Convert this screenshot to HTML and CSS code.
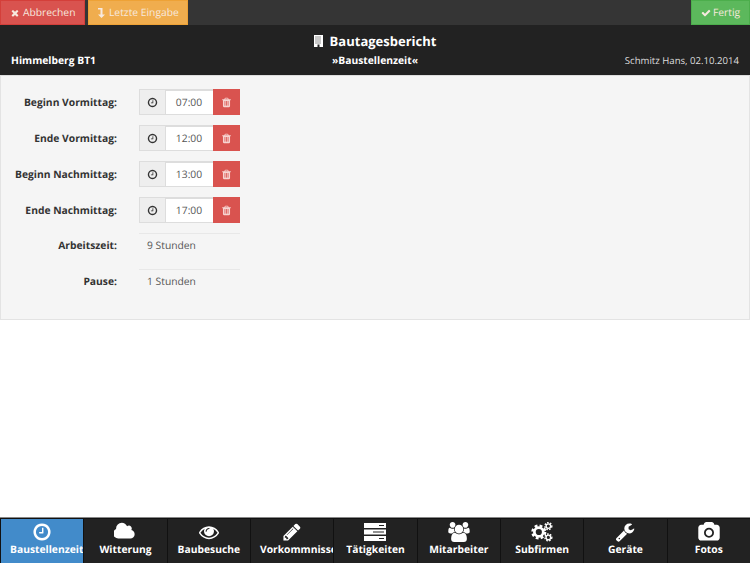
FILE: index.html
```html
<!DOCTYPE html>
<html lang="de">

<head>
    <meta charset="UTF-8">
    <meta name="viewport" content="width=device-width, initial-scale=1.0">
    <title>Bautagesbericht</title>
    <link rel="stylesheet" href="styles.css">
</head>

<body>
    <svg class="defs" width="0" height="0">
        <symbol id="i-times" viewBox="0 0 1792 1792"><path d="M1490 1322q0 40-28 68l-136 136q-28 28-68 28t-68-28l-294-294-294 294q-28 28-68 28t-68-28l-136-136q-28-28-28-68t28-68l294-294-294-294q-28-28-28-68t28-68l136-136q28-28 68-28t68 28l294 294 294-294q28-28 68-28t68 28l136 136q28 28 28 68t-28 68l-294 294 294 294q28 28 28 68z"/></symbol>
        <symbol id="i-check" viewBox="0 0 1792 1792"><path d="M1671 566q0 40-28 68l-724 724-136 136q-28 28-68 28t-68-28l-136-136-362-362q-28-28-28-68t28-68l136-136q28-28 68-28t68 28l294 295 656-657q28-28 68-28t68 28l136 136q28 28 28 68z"/></symbol>
        <symbol id="i-level" viewBox="0 0 7 10"><path d="M0 0h4.500v6.500H7L3.500 10 0 6.500h2.500v-5H0z"/></symbol>
        <symbol id="i-building" viewBox="0 0 18 24"><path fill-rule="evenodd" d="M0 0h18v24H0zM3 3v2h2V3zm4 0v2h2V3zm4 0v2h2V3zM3 7v2h2V7zm4 0v2h2V7zm4 0v2h2V7zM3 11v2h2v-2zm4 0v2h2v-2zm4 0v2h2v-2zM3 15v2h2v-2zm4 0v2h2v-2zm4 0v2h2v-2zM7 19v5h4v-5z"/></symbol>
        <symbol id="i-clock" viewBox="0 0 1792 1792"><path d="M1024 544v448q0 14-9 23t-23 9h-320q-14 0-23-9t-9-23v-64q0-14 9-23t23-9h224v-352q0-14 9-23t23-9h64q14 0 23 9t9 23zm416 352q0 148-73 273t-198 198-273 73-273-73-198-198-73-273 73-273 198-198 273-73 273 73 198 198 73 273zm224 0q0-209-103-385.500t-279.500-279.500-385.500-103-385.500 103-279.500 279.500-103 385.500 103 385.500 279.500 279.500 385.500 103 385.500-103 279.500-279.500 103-385.500z"/></symbol>
        <symbol id="i-trash" viewBox="0 0 1792 1792"><path d="M704 1376v-704q0-14-9-23t-23-9h-64q-14 0-23 9t-9 23v704q0 14 9 23t23 9h64q14 0 23-9t9-23zm256 0v-704q0-14-9-23t-23-9h-64q-14 0-23 9t-9 23v704q0 14 9 23t23 9h64q14 0 23-9t9-23zm256 0v-704q0-14-9-23t-23-9h-64q-14 0-23 9t-9 23v704q0 14 9 23t23 9h64q14 0 23-9t9-23zm-544-992h448l-48-117q-7-9-17-11h-317q-10 2-17 11zm928 32v64q0 14-9 23t-23 9h-96v948q0 83-47 143.500t-113 60.500h-832q-66 0-113-58.500t-47-141.500v-952h-96q-14 0-23-9t-9-23v-64q0-14 9-23t23-9h309l70-167q15-37 54-63t79-26h320q40 0 79 26t54 63l70 167h309q14 0 23 9t9 23z"/></symbol>
        <symbol id="i-cloud" viewBox="0 0 1920 1792"><path d="M1728 1088q0 159-112.500 271.500t-271.500 112.500h-1088q-185 0-316.500-131.500t-131.500-316.500q0-132 71-241.500t187-163.500q-2-28-2-43 0-212 150-362t362-150q158 0 286.500 88t187.500 230q70-62 166-62 106 0 181 75t75 181q0 75-41 138 129 30 213 134.500t84 239.500z" transform="translate(96 0)"/></symbol>
        <symbol id="i-eye" viewBox="0 0 1792 1792"><path d="M1664 960q-152-236-381-353 61 104 61 225 0 185-131.500 316.500t-316.500 131.500-316.500-131.500-131.500-316.500q0-121 61-225-229 117-381 353 133 205 333.500 326.500t434.500 121.500 434.500-121.500 333.500-326.500zm-720-384q0-20-14-34t-34-14q-125 0-214.500 89.500t-89.500 214.500q0 20 14 34t34 14 34-14 14-34q0-86 61-147t147-61q20 0 34-14t14-34zm848 384q0 34-20 69-140 230-376.500 368.500t-499.500 138.500-499.500-139-376.500-368q-20-35-20-69t20-69q140-229 376.500-368t499.500-139 499.500 139 376.500 368q20 35 20 69z"/></symbol>
        <symbol id="i-pencil" viewBox="0 0 1792 1792"><path d="M491 1536l91-91-235-235-91 91v107h128v128h107zm523-928q0-22-22-22-10 0-17 7l-542 542q-7 7-7 17 0 22 22 22 10 0 17-7l542-542q7-7 7-17zm-54-192l416 416-832 832h-416v-416zm683 96q0 53-37 90l-166 166-416-416 166-165q36-38 90-38 53 0 91 38l235 234q37 39 37 91z"/></symbol>
        <symbol id="i-server" viewBox="0 0 22 18"><path fill-rule="evenodd" d="M0 0h22v5H0zm15 2v1h5V2zM0 6.500h22v5H0zm9 2v1h11v-1zM0 13h22v5H0zm15 2v1h5v-1z"/></symbol>
        <symbol id="i-users" viewBox="0 0 1920 1792"><path d="M593 896q-162 5-265 128h-134q-82 0-138-40.500t-56-118.500q0-353 124-353 6 0 43.500 21t97.500 42.500 119 21.500q67 0 133-23-5 37-5 66 0 139 81 256zm1071 637q0 120-73 189.500t-194 69.500h-874q-121 0-194-69.500t-73-189.500q0-53 3.500-103.500t14-109 26.500-108.500 43-97.500 62-81 85.500-53.500 111.500-20q10 0 43 21.500t73 48 107 48 135 21.500 135-21.500 107-48 73-48 43-21.500q61 0 111.500 20t85.500 53.500 62 81 43 97.500 26.500 108.500 14 109 3.500 103.500zm-1024-1277q0 106-75 181t-181 75-181-75-75-181 75-181 181-75 181 75 75 181zm704 384q0 159-112.500 271.500t-271.500 112.500-271.500-112.500-112.500-271.500 112.500-271.500 271.500-112.500 271.500 112.500 112.500 271.500zm576 225q0 78-56 118.500t-138 40.500h-134q-103-123-265-128 81-117 81-256 0-29-5-66 66 23 133 23 59 0 119-21.500t97.500-42.500 43.500-21q124 0 124 353zm-128-609q0 106-75 181t-181 75-181-75-75-181 75-181 181-75 181 75 75 181z"/></symbol>
        <symbol id="i-gears" viewBox="0 0 24 22">
            <g fill="none" stroke="currentColor">
                <circle cx="8.500" cy="11" r="4.900" stroke-width="3"/>
                <circle cx="8.500" cy="11" r="7" stroke-width="2.600" stroke-dasharray="3.100 2.400"/>
                <circle cx="19" cy="4.500" r="2.500" stroke-width="1.500"/>
                <circle cx="19" cy="4.500" r="3.800" stroke-width="1.500" stroke-dasharray="1.800 1.400"/>
                <circle cx="19" cy="17" r="2.500" stroke-width="1.500"/>
                <circle cx="19" cy="17" r="3.800" stroke-width="1.500" stroke-dasharray="1.800 1.400"/>
            </g>
        </symbol>
        <symbol id="i-wrench" viewBox="0 0 1792 1792"><path d="M448 1472q0-26-19-45t-45-19-45 19-19 45 19 45 45 19 45-19 19-45zm644-420l-682 682q-37 37-90 37-52 0-91-37l-106-108q-38-36-38-90 0-53 38-91l681-681q39 98 114.500 173.500t173.500 114.500zm634-435q0 39-23 106-47 134-164.500 217.500t-258.500 83.500q-185 0-316.500-131.500t-131.500-316.500 131.500-316.500 316.500-131.500q58 0 121.500 16.500t107.500 46.500q16 11 16 28t-16 28l-293 169v224l193 107q5-3 79-48.500t135.500-81 70.500-35.500q15 0 23.500 10t8.500 25z"/></symbol>
        <symbol id="i-camera" viewBox="-32 0 1920 1792"><path d="M928 672q119 0 203.500 84.500t84.500 203.500-84.500 203.500-203.500 84.500-203.500-84.500-84.500-203.500 84.500-203.500 203.500-84.500zm704-416q106 0 181 75t75 181v896q0 106-75 181t-181 75h-1408q-106 0-181-75t-75-181v-896q0-106 75-181t181-75h224l51-136q19-49 69.500-84.500t103.500-35.500h512q53 0 103.500 35.500t69.500 84.500l51 136h224zm-704 1152q185 0 316.500-131.500t131.500-316.500-131.500-316.500-316.500-131.500-316.500 131.500-131.500 316.500 131.500 316.500 316.500 131.500z"/></symbol>
    </svg>

    <div class="toolbar">
        <a class="tool tool-red"><svg class="icon"><use href="#i-times"/></svg>Abbrechen</a>
        <a class="tool tool-orange"><svg class="icon"><use href="#i-level"/></svg>Letzte Eingabe</a>
        <a class="tool tool-green"><svg class="icon"><use href="#i-check"/></svg>Fertig</a>
    </div>

    <div class="header">
        <h1><svg class="icon-title"><use href="#i-building"/></svg>Bautagesbericht</h1>
        <div class="header-row">
            <span class="project">Himmelberg BT1</span>
            <span class="section">»Baustellenzeit«</span>
            <span class="author">Schmitz Hans, 02.10.2014</span>
        </div>
    </div>

    <div class="panel">
        <div class="row">
            <label>Beginn Vormittag:</label>
            <div class="time-group">
                <span class="addon"><svg class="icon-clock"><use href="#i-clock"/></svg></span>
                <span class="time">07:00</span>
                <span class="del"><svg class="icon-trash"><use href="#i-trash"/></svg></span>
            </div>
        </div>
        <div class="row">
            <label>Ende Vormittag:</label>
            <div class="time-group">
                <span class="addon"><svg class="icon-clock"><use href="#i-clock"/></svg></span>
                <span class="time">12:00</span>
                <span class="del"><svg class="icon-trash"><use href="#i-trash"/></svg></span>
            </div>
        </div>
        <div class="row">
            <label>Beginn Nachmittag:</label>
            <div class="time-group">
                <span class="addon"><svg class="icon-clock"><use href="#i-clock"/></svg></span>
                <span class="time">13:00</span>
                <span class="del"><svg class="icon-trash"><use href="#i-trash"/></svg></span>
            </div>
        </div>
        <div class="row">
            <label>Ende Nachmittag:</label>
            <div class="time-group">
                <span class="addon"><svg class="icon-clock"><use href="#i-clock"/></svg></span>
                <span class="time">17:00</span>
                <span class="del"><svg class="icon-trash"><use href="#i-trash"/></svg></span>
            </div>
        </div>
        <div class="row row-static">
            <label>Arbeitszeit:</label>
            <div class="value">9 Stunden</div>
        </div>
        <div class="row row-static">
            <label>Pause:</label>
            <div class="value">1 Stunden</div>
        </div>
    </div>

    <div class="nav">
        <a class="nav-item active"><svg><use href="#i-clock"/></svg><span>Baustellenzeit</span></a>
        <a class="nav-item"><svg><use href="#i-cloud"/></svg><span>Witterung</span></a>
        <a class="nav-item"><svg><use href="#i-eye"/></svg><span>Baubesuche</span></a>
        <a class="nav-item"><svg><use href="#i-pencil"/></svg><span>Vorkommnisse</span></a>
        <a class="nav-item"><svg><use href="#i-server"/></svg><span>Tätigkeiten</span></a>
        <a class="nav-item"><svg><use href="#i-users"/></svg><span>Mitarbeiter</span></a>
        <a class="nav-item"><svg><use href="#i-gears"/></svg><span>Subfirmen</span></a>
        <a class="nav-item"><svg><use href="#i-wrench"/></svg><span>Geräte</span></a>
        <a class="nav-item"><svg><use href="#i-camera"/></svg><span>Fotos</span></a>
    </div>
</body>

</html>
```

FILE: styles.css
```css
* {
    margin: 0;
    padding: 0;
    box-sizing: border-box;
}

html,
body {
    height: 100%;
}

body {
    display: flex;
    flex-direction: column;
    font-family: "Open Sans", sans-serif;
    font-size: 10.3px;
    text-rendering: geometricPrecision;
    color: #333;
    background-color: #fff;
    overflow: hidden;
}

svg {
    fill: currentColor;
}

.defs {
    display: none;
}

/* top buttons */
.toolbar {
    display: flex;
    gap: 3px;
    height: 25px;
    background-color: #353535;
}

.tool {
    display: flex;
    align-items: center;
    height: 25px;
    padding: 0 9px;
    color: #f7e9df;
    white-space: nowrap;
    border: 1px solid transparent;
}

.tool .icon {
    flex-shrink: 0;
    width: 10px;
    height: 10px;
    margin-right: 3px;
}

.tool-red {
    width: 85px;
    background-color: #d9534f;
    border-color: #d43f3a;
}

.tool-orange {
    width: 100px;
    background-color: #f0ad4e;
    border-color: #eea236;
}

.tool-orange .icon {
    width: 7px;
    margin-right: 4px;
}

.tool-green {
    margin-left: auto;
    width: 59px;
    background-color: #5cb85c;
    border-color: #4cae4c;
}

.tool-green .icon {
    margin-right: 2px;
}

/* title block */
.header {
    height: 50px;
    padding: 7px 11px 0 11px;
    color: #fff;
    background-color: #222;
}

.header h1 {
    display: flex;
    justify-content: center;
    align-items: center;
    height: 17px;
    font-size: 13px;
    font-weight: 700;
}

.icon-title {
    width: 9px;
    height: 12px;
    margin-right: 7px;
}

.header-row {
    display: grid;
    grid-template-columns: 1fr auto 1fr;
    margin-top: 4px;
    line-height: 16px;
}

.project,
.section {
    font-weight: 700;
}

.author {
    text-align: right;
    font-size: 9.6px;
    color: #ddd;
}

/* form panel */
.panel {
    height: 245px;
    padding: 13px 0 0 0;
    background-color: #f5f5f5;
    border: 1px solid #e3e3e3;
    border-top-color: #ddd;
}

.row {
    display: flex;
    height: 36px;
}

.row label {
    width: 116px;
    margin-right: 22px;
    padding-top: 6px;
    text-align: right;
    font-weight: 700;
    line-height: 16px;
}

.row-static label {
    padding-top: 5px;
}

.time-group {
    display: flex;
    width: 101px;
    height: 26px;
}

.addon {
    display: flex;
    justify-content: center;
    align-items: center;
    width: 27px;
    background-color: #eee;
    border: 1px solid #ddd;
}

.icon-clock {
    width: 11px;
    height: 11px;
}

.time {
    width: 47px;
    padding-right: 1px;
    text-align: center;
    line-height: 24px;
    color: #555;
    background-color: #fff;
    border: 1px solid #ddd;
    border-width: 2px 0 1px 0;
}

.del {
    display: flex;
    justify-content: center;
    align-items: center;
    width: 27px;
    color: #f6d5d2;
    background-color: #d9534f;
}

.icon-trash {
    width: 11px;
    height: 11px;
}

.value {
    width: 101px;
    height: 26px;
    padding: 4px 0 0 8px;
    line-height: 16px;
    color: #555;
    border-top: 1px solid #e8e8e8;
}

/* bottom tabs */
.nav {
    display: flex;
    gap: 1px;
    height: 46px;
    margin-top: auto;
    padding: 1px 0 0 1px;
    background-color: #111;
    border-top: 1px solid #888;
}

.nav-item {
    flex: 1;
    min-width: 0;
    overflow: hidden;
    padding: 3px 9px 0 9px;
    text-align: center;
    white-space: nowrap;
    color: #fff;
    background-color: #222;
}

.nav-item.active {
    background-color: #428bca;
}

.nav-item svg {
    display: block;
    width: 22px;
    height: 20px;
    margin: 0 auto;
}

.nav-item span {
    display: inline-block;
    margin-top: 1px;
    font-weight: 700;
    line-height: 15px;
}
```
